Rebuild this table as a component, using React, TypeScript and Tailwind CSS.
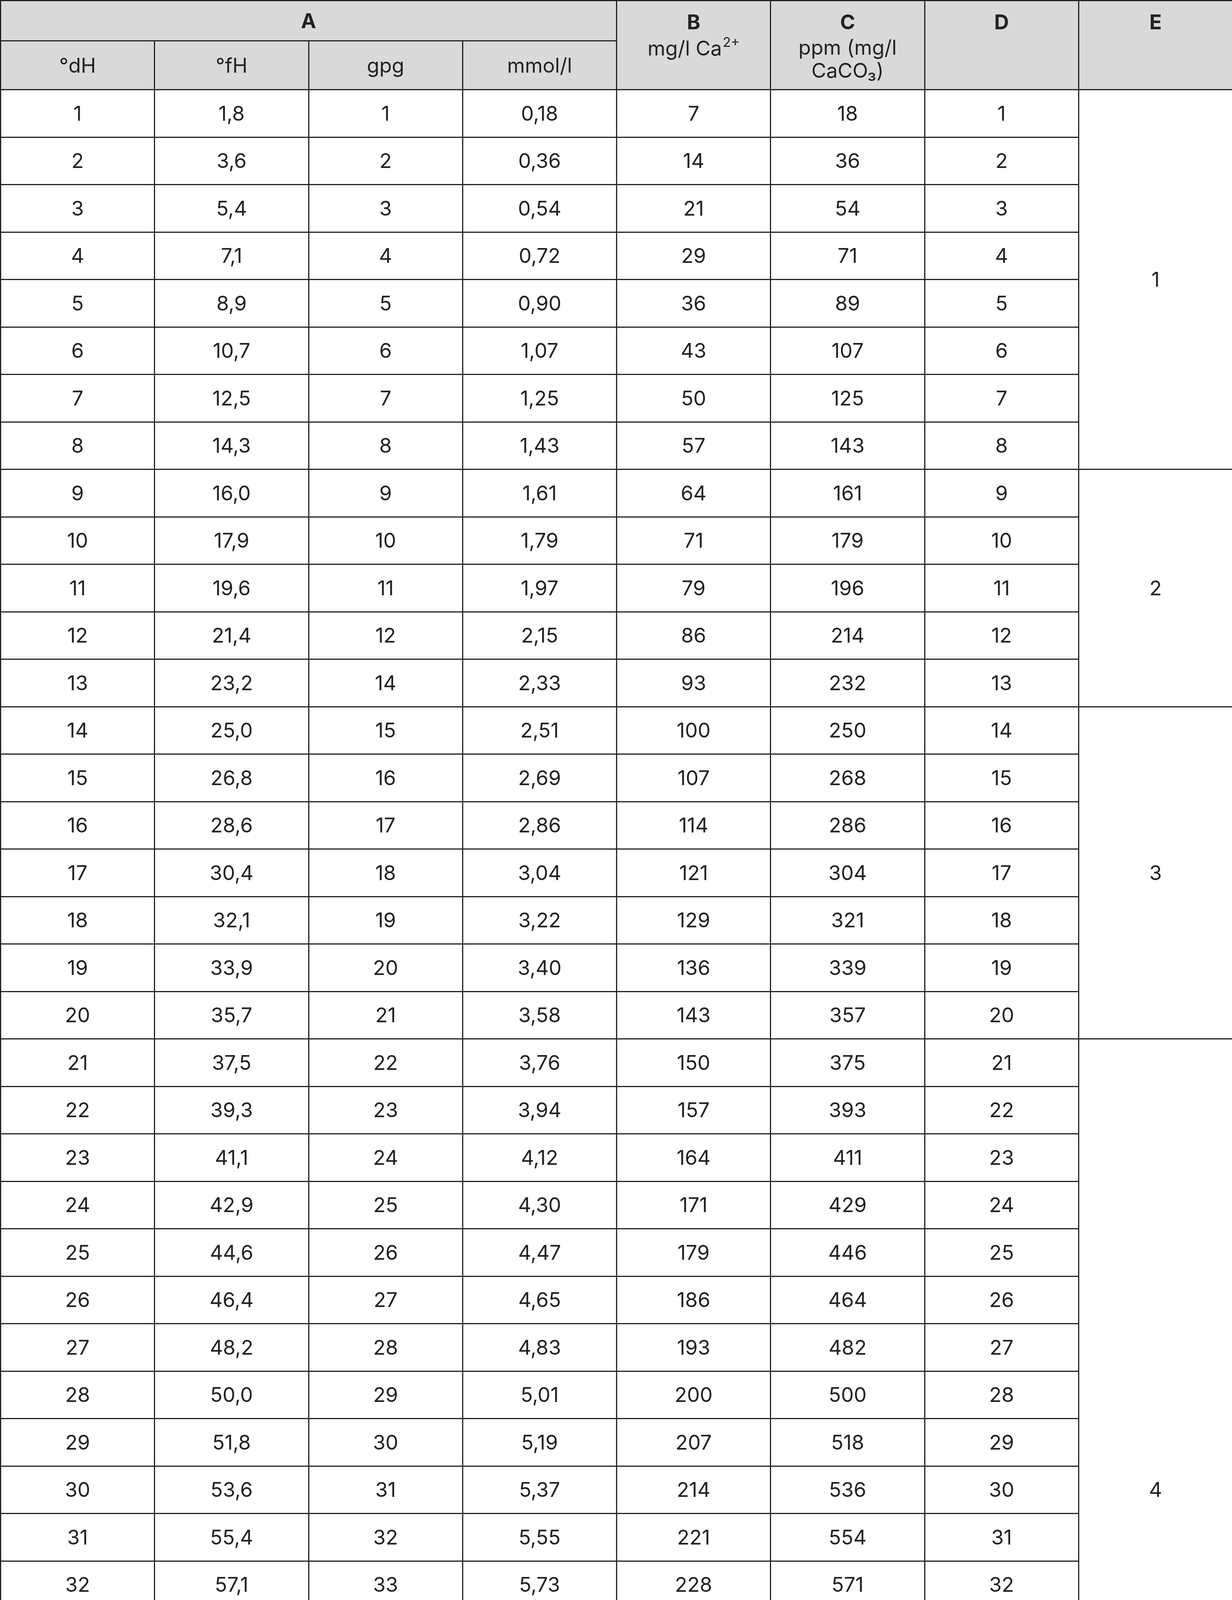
import React from "react";

const dH = Array.from({ length: 36 }, (_, i) => String(i + 1)).concat(["37–45", "46–60", "61–70"]);
const fH = "1,8 3,6 5,4 7,1 8,9 10,7 12,5 14,3 16,0 17,9 19,6 21,4 23,2 25,0 26,8 28,6 30,4 32,1 33,9 35,7 37,5 39,3 41,1 42,9 44,6 46,4 48,2 50,0 51,8 53,6 55,4 57,1 58,9 60,7 62,5 64,3 66–80 82–107 109–125".split(" ");
const gpg = "1 2 3 4 5 6 7 8 9 10 11 12 14 15 16 17 18 19 20 21 22 23 24 25 26 27 28 29 30 31 32 33 34 35 36 38 39–47 48–63 64–73".split(" ");
const mmol = "0,18 0,36 0,54 0,72 0,90 1,07 1,25 1,43 1,61 1,79 1,97 2,15 2,33 2,51 2,69 2,86 3,04 3,22 3,40 3,58 3,76 3,94 4,12 4,30 4,47 4,65 4,83 5,01 5,19 5,37 5,55 5,73 5,91 6,09 6,27 6,44 6,62–8,06 8,23–10,74 10,92–12,53".split(" ");
const B = "7 14 21 29 36 43 50 57 64 71 79 86 93 100 107 114 121 129 136 143 150 157 164 171 179 186 193 200 207 214 221 228 236 243 250 257 264–321 328–428 436–500".split(" ");
const C = "18 36 54 71 89 107 125 143 161 179 196 214 232 250 268 286 304 321 339 357 375 393 411 429 446 464 482 500 518 536 554 571 589 607 625 643 661–804 821–1071 1089–1250".split(" ");

const eGroups: Record<number, [number, string]> = { 0: [8, "1"], 8: [5, "2"], 13: [7, "3"], 20: [19, "4"] };

const cell = "border-[3px] border-[#222] text-center align-middle p-0";
const headTop = "border-[3px] border-[#222] text-center align-top p-0 pt-[22px]";

export default function App() {
  return (
    <div className="w-[3154px] bg-white text-[#222]" style={{ fontFamily: "Inter, 'Noto Sans', sans-serif" }}>
      <table className="w-[3154px] table-fixed border-collapse text-[52px] leading-[63px]">
        <colgroup>
          {Array.from({ length: 8 }).map((_, i) => (
            <col key={i} className="w-[394.25px]" />
          ))}
        </colgroup>
        <thead>
          <tr className="h-[103px] bg-[#d9d9d9]">
            <th colSpan={4} className={`${cell} font-bold`}>A</th>
            <th rowSpan={2} className={`${headTop} font-normal`}>
              <div className="mb-[4px] font-bold">B</div>
              <div>
                mg/l Ca
                <span className="relative -top-[22px] ml-[2px] text-[34px] leading-none">2+</span>
              </div>
            </th>
            <th rowSpan={2} className={`${headTop} font-normal`}>
              <div className="mb-[4px] font-bold">C</div>
              <div className="px-10 leading-[59px]">ppm (mg/l CaCO₃)</div>
            </th>
            <th rowSpan={2} className={`${headTop} font-bold`}>D</th>
            <th rowSpan={2} className={`${headTop} font-bold`}>E</th>
          </tr>
          <tr className="h-[125px] bg-[#d9d9d9]">
            <th className={`${cell} font-normal`}>°dH</th>
            <th className={`${cell} font-normal`}>°fH</th>
            <th className={`${cell} font-normal`}>gpg</th>
            <th className={`${cell} font-normal`}>mmol/l</th>
          </tr>
        </thead>
        <tbody>
          {dH.map((d, i) => (
            <tr key={i} className="h-[121.5px]">
              <td className={cell}>{d}</td>
              <td className={cell}>{fH[i]}</td>
              <td className={cell}>{gpg[i]}</td>
              <td className={cell}>{mmol[i]}</td>
              <td className={cell}>{B[i]}</td>
              <td className={cell}>{C[i]}</td>
              <td className={cell}>{d}</td>
              {eGroups[i] && (
                <td rowSpan={eGroups[i][0]} className={cell}>
                  {eGroups[i][1]}
                </td>
              )}
            </tr>
          ))}
        </tbody>
      </table>
    </div>
  );
}
